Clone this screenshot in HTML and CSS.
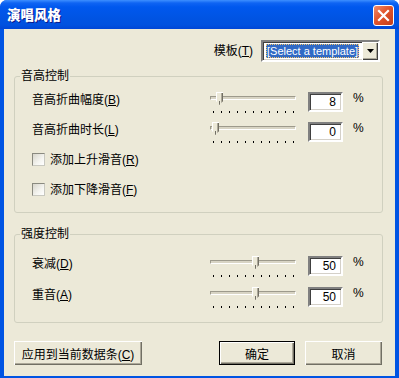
FILE: index.html
```html
<!DOCTYPE html>
<html lang="zh-CN">
<head>
    <meta charset="UTF-8">
    <title>演唱风格</title>
    <link rel="stylesheet" href="styles.css">
</head>
<body>
    <div class="window">
        <div class="titlebar">
            <span class="title">演唱风格</span>
            <button class="close" title="关闭">
                <svg width="19" height="19" viewBox="0 0 19 19">
                    <path d="M5 5 L14 14 M14 5 L5 14" stroke="#fff" stroke-width="2.2" stroke-linecap="square"/>
                </svg>
            </button>
        </div>
        <div class="client">
            <div class="template-row">
                <span class="label">模板(<u>T</u>)</span>
                <div class="combo">
                    <span class="combo-text">[Select a template]</span>
                    <span class="combo-btn">
                        <svg width="7" height="4" viewBox="0 0 7 4"><path d="M0 0 H7 L3.5 4 Z" fill="#000"/></svg>
                    </span>
                </div>
            </div>

            <fieldset class="group group-pitch">
                <legend>音高控制</legend>
                <div class="row">
                    <span class="label">音高折曲幅度(<u>B</u>)</span>
                    <div class="slider">
                        <div class="track"></div>
                        <div class="ticks"></div>
                        <div class="thumb" style="left: 6px"></div>
                    </div>
                    <div class="edit">8</div>
                    <span class="pct">%</span>
                </div>
                <div class="row">
                    <span class="label">音高折曲时长(<u>L</u>)</span>
                    <div class="slider">
                        <div class="track"></div>
                        <div class="ticks"></div>
                        <div class="thumb" style="left: 2px"></div>
                    </div>
                    <div class="edit">0</div>
                    <span class="pct">%</span>
                </div>
                <div class="row">
                    <label class="check"><span class="box"></span><span>添加上升滑音(<u>R</u>)</span></label>
                </div>
                <div class="row">
                    <label class="check"><span class="box"></span><span>添加下降滑音(<u>F</u>)</span></label>
                </div>
            </fieldset>

            <fieldset class="group group-strength">
                <legend>强度控制</legend>
                <div class="row">
                    <span class="label">衰减(<u>D</u>)</span>
                    <div class="slider">
                        <div class="track"></div>
                        <div class="ticks"></div>
                        <div class="thumb" style="left: 42px"></div>
                    </div>
                    <div class="edit">50</div>
                    <span class="pct">%</span>
                </div>
                <div class="row">
                    <span class="label">重音(<u>A</u>)</span>
                    <div class="slider">
                        <div class="track"></div>
                        <div class="ticks"></div>
                        <div class="thumb" style="left: 42px"></div>
                    </div>
                    <div class="edit">50</div>
                    <span class="pct">%</span>
                </div>
            </fieldset>

            <div class="buttons">
                <button class="btn btn-apply">应用到当前数据条(<u>C</u>)</button>
                <span class="spacer"></span>
                <button class="btn btn-default">确定</button>
                <button class="btn">取消</button>
            </div>
        </div>
    </div>
</body>
</html>
```

FILE: styles.css
```css
body {
    margin: 0;
    font-family: "Liberation Sans", "Noto Sans CJK SC", sans-serif;
    font-size: 12px;
    line-height: 14px;
    color: #000;
    background: #fff;
}

.window {
    width: 399px;
    height: 378px;
    box-sizing: border-box;
    display: flex;
    flex-direction: column;
    background: #0054e3;
    border-radius: 7px 7px 0 0;
    overflow: hidden;
}

/* title bar */
.titlebar {
    height: 29px;
    flex: none;
    display: flex;
    align-items: center;
    padding: 0 5px 0 7px;
    background: linear-gradient(to bottom, #3d8fff 0, #0f64f3 3px, #0058ee 7px, #0054e3 18px, #0051df 25px, #0046d6 29px);
}

.title {
    flex: 1;
    color: #fff;
    font-family: "Noto Sans CJK SC", sans-serif;
    font-size: 13.5px;
    font-weight: 900;
    text-shadow: 1px 1px 0 #0a1a8c;
    margin-top: -1px;
}

.close {
    width: 21px;
    height: 21px;
    padding: 0;
    margin-top: 1px;
    border: 1px solid #fff;
    border-radius: 3px;
    background: linear-gradient(135deg, #f08c6c 0, #e2552c 45%, #c33d1b 100%);
    display: flex;
    align-items: center;
    justify-content: center;
}

/* dialog body */
.client {
    flex: 1;
    margin: 0 4px 3px 4px;
    padding: 11px 12px 11px 10px;
    background: #ece9d8;
    display: flex;
    flex-direction: column;
}

.template-row {
    height: 22px;
    display: flex;
    align-items: center;
    justify-content: flex-end;
    gap: 8px;
    padding-right: 3px;
    margin-bottom: 7px;
}

.combo {
    width: 112px;
    height: 18px;
    border: 2px solid;
    border-color: #808080 #fff #fff #808080;
    box-shadow: inset 1px 1px 0 #404040, inset -1px -1px 0 #d4d0c8;
    background: #fff;
    display: flex;
    align-items: center;
    padding-left: 3px;
}

.combo-text {
    flex: none;
    height: 14px;
    margin-right: auto;
    background: #316ac5;
    color: #fff;
    font-size: 11px;
    line-height: 14px;
    padding: 0 1px;
    white-space: nowrap;
    outline: 1px dotted #f5c56a;
    outline-offset: -1px;
}

.combo-btn {
    width: 16px;
    height: 18px;
    flex: none;
    box-sizing: border-box;
    background: #ece9d8;
    box-shadow: inset 1px 1px 0 #fff, inset -1px -1px 0 #404040, inset -2px -2px 0 #aca899;
    display: flex;
    align-items: center;
    justify-content: center;
}

/* group boxes */
.group {
    margin: 0;
    padding: 2px 17px 7px 5px;
    border: 1px solid #d0d0bf;
    border-radius: 3px;
}

.group legend {
    padding: 0 1px;
    line-height: 14px;
}

.group-pitch {
    margin-bottom: 14px;
}

.group-strength {
    padding-top: 8px;
    padding-bottom: 12px;
    margin-bottom: 18px;
}

.group-strength .row + .row {
    margin-top: 1px;
}

.row {
    height: 30px;
    display: flex;
    align-items: center;
    padding-left: 12px;
}

.row .label {
    flex: 1;
}

/* trackbar */
.slider {
    position: relative;
    width: 86px;
    height: 24px;
    margin-top: 6px;
    margin-right: 12px;
}

.track {
    position: absolute;
    left: 0;
    right: 0;
    top: 5px;
    height: 2px;
    border: 1px solid;
    border-color: #9d9a8c #fff #fff #9d9a8c;
    background: #d8d4c4;
}

.ticks {
    position: absolute;
    left: 3px;
    width: 81px;
    top: 20px;
    height: 2px;
    background: repeating-linear-gradient(to right, #000 0 1px, transparent 1px 8px);
}

.thumb {
    position: absolute;
    top: 1px;
    width: 7px;
    height: 13px;
    background: #ece9d8;
    clip-path: polygon(0 0, 100% 0, 100% 70%, 50% 100%, 0 70%);
    box-shadow: inset 1px 1px 0 #fff, inset -1px 0 0 #716f64, inset -2px 0 0 #aca899;
}

.thumb::after {
    content: "";
    position: absolute;
    left: 3px;
    bottom: 0;
    width: 1px;
    height: 4px;
    background: #716f64;
}

/* edit boxes */
.edit {
    width: 26px;
    height: 16px;
    flex: none;
    margin-top: 4px;
    border: 2px solid;
    border-color: #808080 #fff #fff #808080;
    box-shadow: inset 1px 1px 0 #404040, inset -1px -1px 0 #d4d0c8;
    background: #fff;
    text-align: right;
    padding-right: 5px;
    line-height: 17px;
}

.pct {
    width: 12px;
    margin-left: 10px;
    margin-bottom: 5px;
}

/* checkboxes */
.check {
    display: flex;
    align-items: center;
    gap: 5px;
}

.box {
    width: 11px;
    height: 11px;
    border: 1px solid;
    border-color: #8a8a80 #c8c8c0 #c8c8c0 #8a8a80;
    background: linear-gradient(135deg, #d8d6cc 0, #f4f4f0 60%, #fff 100%);
    margin-top: -1px;
}

/* buttons */
.buttons {
    height: 24px;
    display: flex;
    gap: 10px;
    padding-right: 1px;
}

.spacer {
    flex: 1;
}

.btn {
    height: 24px;
    padding: 0;
    font-family: "Liberation Sans", "Noto Sans CJK SC", sans-serif;
    font-size: 12px;
    color: #000;
    border: none;
    background: #ece9d8;
    box-shadow: inset 1px 1px 0 #fff, inset -1px -1px 0 #716f64, inset -2px -2px 0 #aca899;
    width: 77px;
}

.btn-apply {
    width: 128px;
}

.btn-default {
    width: 76px;
    box-shadow: inset 0 0 0 1px #000, inset 2px 2px 0 #fff, inset -2px -2px 0 #716f64, inset -3px -3px 0 #aca899;
}
```
